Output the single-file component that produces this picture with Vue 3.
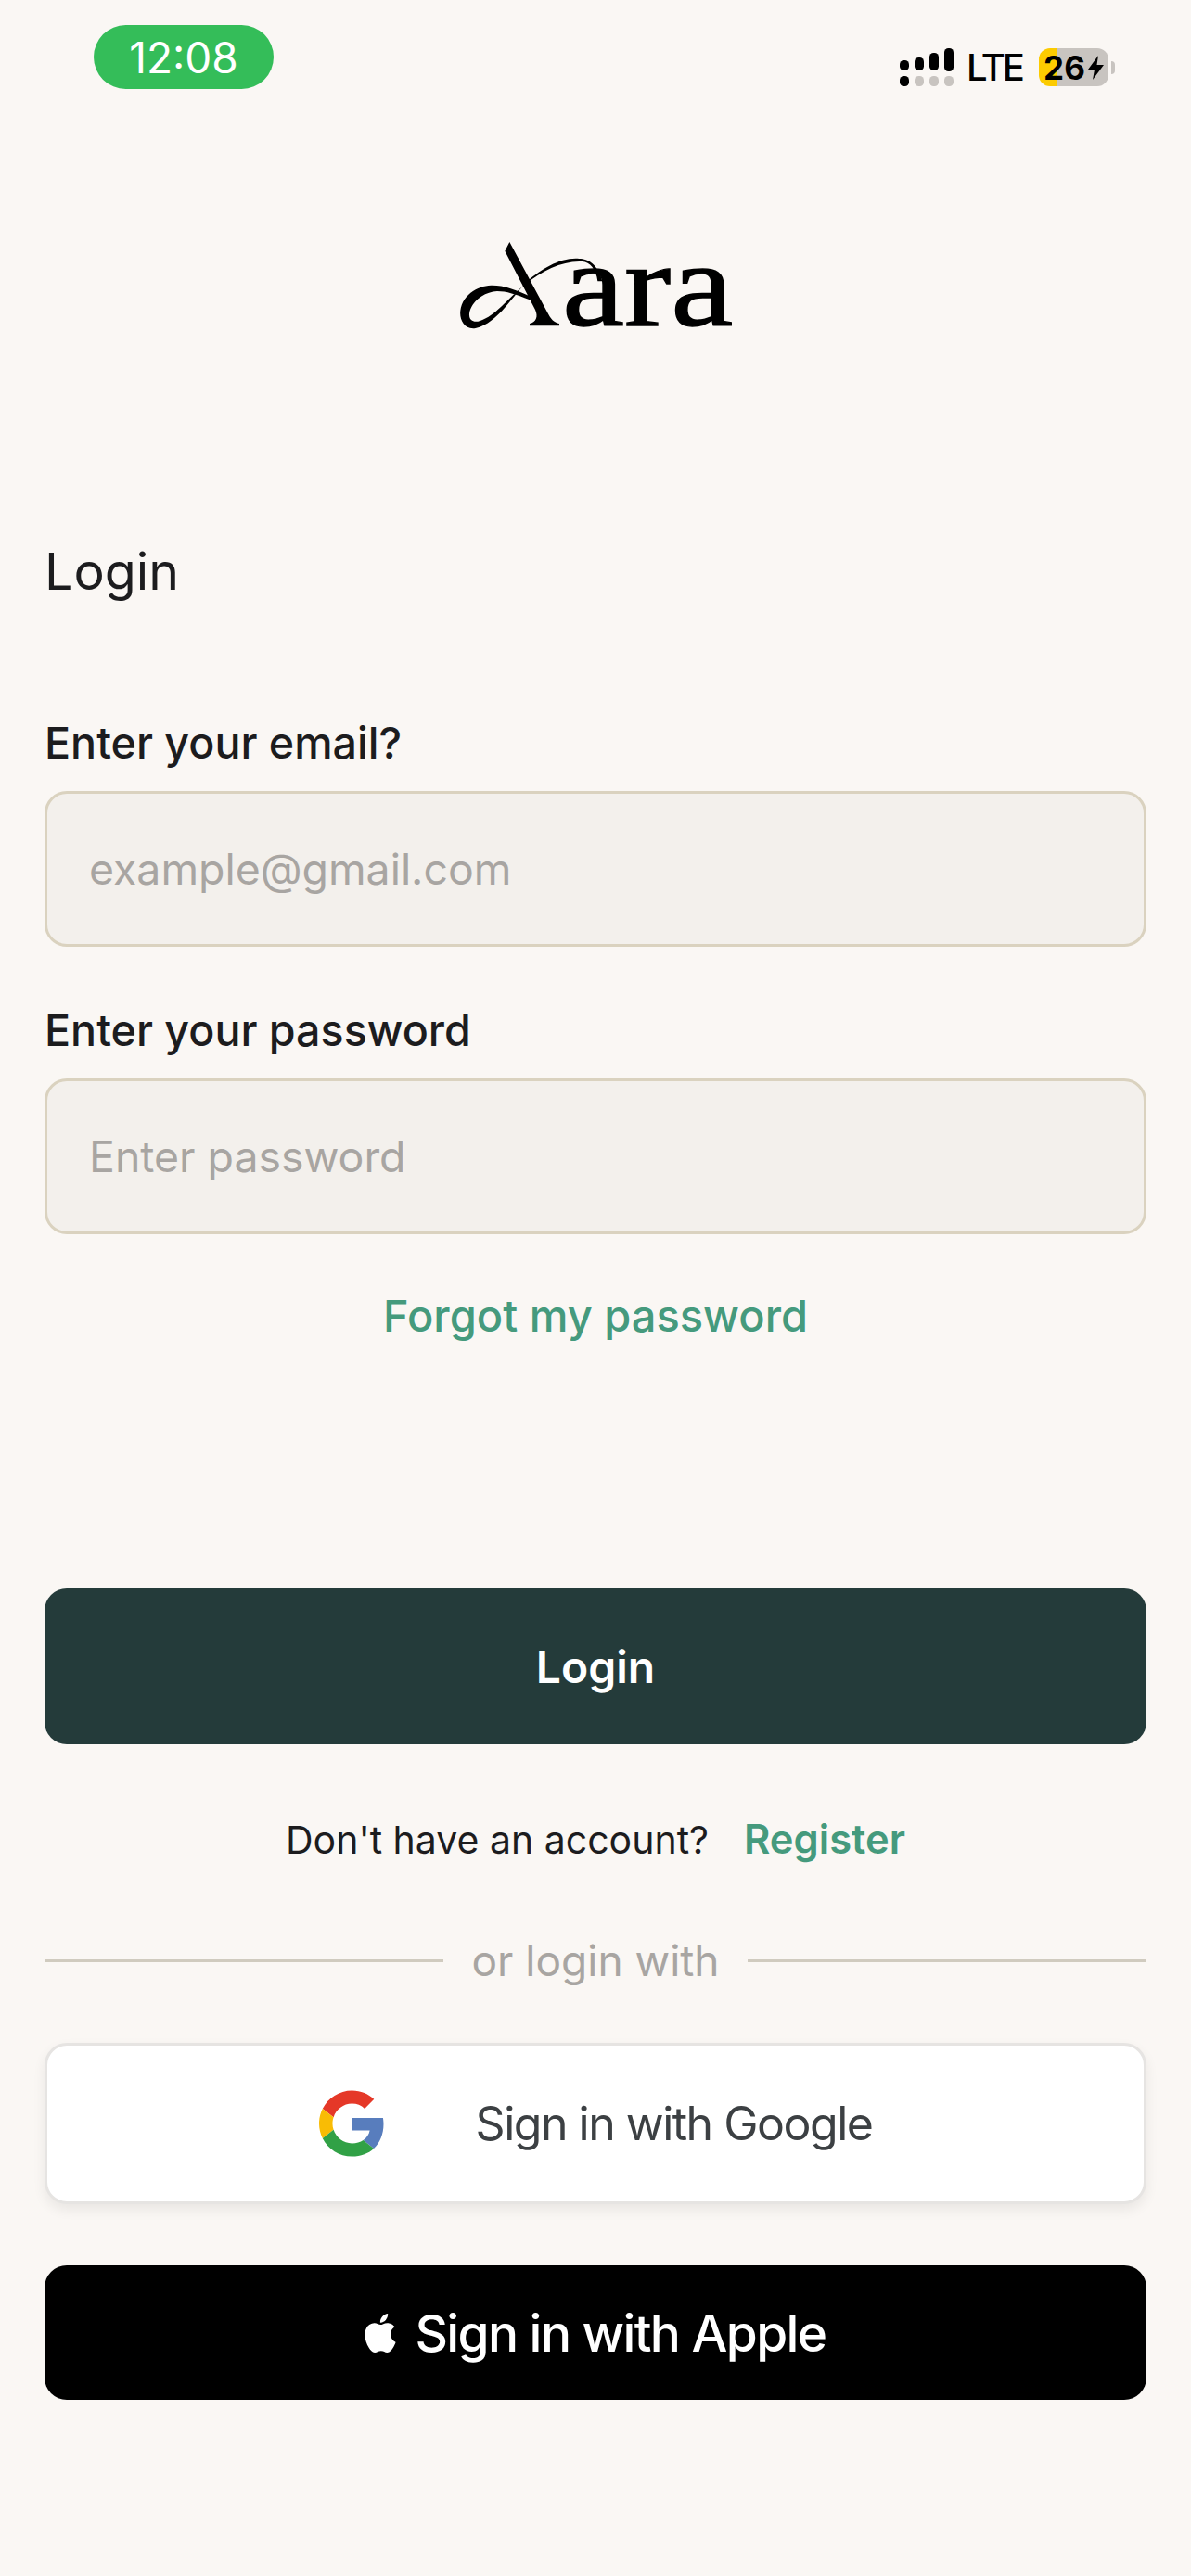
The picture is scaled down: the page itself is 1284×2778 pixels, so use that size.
<template>
  <div class="page">
    <div class="status">
      <div class="clock">12:08</div>
      <div class="status-right">
        <svg class="signal" width="58" height="41" viewBox="0 0 58 41">
          <rect x="0" y="13" width="10" height="11" rx="4.5" fill="#000" />
          <rect x="16" y="10" width="10" height="14" rx="4.5" fill="#000" />
          <rect x="32" y="5" width="10" height="19" rx="4.5" fill="#000" />
          <rect x="48" y="0" width="10" height="25" rx="4.5" fill="#000" />
          <rect x="0" y="30" width="10" height="11" rx="4.5" fill="#000" />
          <rect x="16" y="30" width="10" height="11" rx="4.5" fill="#c8c4c0" />
          <rect x="32" y="30" width="10" height="11" rx="4.5" fill="#c8c4c0" />
          <rect x="48" y="30" width="10" height="11" rx="4.5" fill="#c8c4c0" />
        </svg>
        <span class="lte">LTE</span>
        <div class="battery">
          <span>26</span>
          <svg width="17" height="26" viewBox="0 0 17 26"><path d="M11 0 L0 15 H7 L5 26 L17 10 H9.500 Z" fill="#000" /></svg>
        </div>
      </div>
    </div>

    <div class="logo-row">
      <svg class="logo" width="340" height="170" viewBox="0 -60 1020 510">
        <path d="M235 63 L220 92 L318 282 C328 304 322 322 300 327 L300 334 L396 334 L396 327 C378 324 368 312 358 292 Z" fill="#000" />
        <path d="M535 190 C520 135 490 117 460 117 C400 112 340 150 295 188 C250 228 200 325 125 342 C90 348 72 315 76 285 C82 235 130 205 175 203 C215 202 250 215 305 240 L300 250 C255 232 225 222 195 222 C150 224 108 260 105 295 C103 318 120 325 140 318 C190 300 225 250 285 200 C340 155 410 122 470 126 C495 128 515 150 520 190 Z" fill="#000" />
        <text x="405" y="333" class="logo-text" textLength="553" lengthAdjust="spacingAndGlyphs">ara</text>
      </svg>
    </div>

    <h1 class="title">Login</h1>

    <label class="label">Enter your email?</label>
    <div class="input">example@gmail.com</div>

    <label class="label second">Enter your password</label>
    <div class="input">Enter password</div>

    <a class="forgot">Forgot my password</a>

    <button class="btn-login">Login</button>

    <div class="register">
      <span>Don't have an account?</span>
      <a>Register</a>
    </div>

    <div class="divider">
      <span class="line"></span>
      <span class="or">or login with</span>
      <span class="line"></span>
    </div>

    <button class="btn-google">
      <svg width="71" height="72" viewBox="0 0 48 48">
        <path fill="#E53828" d="M24 9.5c3.54 0 6.71 1.220 9.210 3.600l6.850-6.850C35.900 2.380 30.470 0 24 0 14.620 0 6.510 5.380 2.560 13.220l7.980 6.190C12.430 13.720 17.740 9.500 24 9.500z" />
        <path fill="#587DBD" d="M46.980 24.550c0-1.570-.15-3.090-.38-4.550H24v9.020h12.940c-.58 2.960-2.260 5.480-4.780 7.180l7.730 6c4.510-4.180 7.090-10.360 7.090-17.650z" />
        <path fill="#F9BC05" d="M10.530 28.590c-.48-1.450-.76-2.990-.76-4.590s.27-3.140.76-4.590l-7.980-6.190C.92 16.460 0 20.120 0 24c0 3.880.92 7.540 2.560 10.780l7.970-6.190z" />
        <path fill="#31A146" d="M24 48c6.480 0 11.930-2.130 15.890-5.810l-7.730-6c-2.150 1.450-4.920 2.300-8.160 2.300-6.260 0-11.570-4.220-13.470-9.910l-7.980 6.190C6.510 42.620 14.620 48 24 48z" />
      </svg>
      <span>Sign in with Google</span>
    </button>

    <button class="btn-apple">
      <svg width="34" height="42" viewBox="2 0 20 24" preserveAspectRatio="none">
        <path fill="#fff" d="M12.152 6.896c-.948 0-2.415-1.078-3.960-1.040-2.040.027-3.910 1.183-4.961 3.014-2.117 3.675-.546 9.103 1.519 12.090 1.013 1.454 2.208 3.090 3.792 3.039 1.520-.065 2.090-.987 3.935-.987 1.831 0 2.350.987 3.960.948 1.637-.026 2.676-1.480 3.676-2.948 1.156-1.688 1.636-3.325 1.662-3.415-.039-.013-3.182-1.221-3.220-4.857-.026-3.040 2.480-4.494 2.597-4.559-1.429-2.090-3.623-2.324-4.390-2.376-2-.156-3.675 1.090-4.610 1.090zM15.530 3.830c.843-1.012 1.400-2.427 1.245-3.830-1.207.052-2.662.805-3.532 1.818-.78.896-1.454 2.338-1.273 3.714 1.338.104 2.715-.688 3.559-1.701" />
      </svg>
      <span>Sign in with Apple</span>
    </button>
  </div>
</template>

<script setup>
</script>

<style>
html, body { background: #faf7f4; }
</style>

<style scoped>
.page {
  width: 1284px; height: 2778px; box-sizing: border-box; overflow: hidden;
  padding: 27px 48px 0; background: #faf7f4; color: #1c1c1e;
  font-family: Inter, "Noto Sans", sans-serif;
  display: flex; flex-direction: column;
}
.status { display: flex; justify-content: space-between; align-items: flex-start; padding: 0 0 0 53px; }
.clock {
  width: 194px; height: 69px; border-radius: 35px; background: #34bd59; color: #fff;
  font-size: 46px; font-weight: 400; display: flex; align-items: center; justify-content: center;
}
.status-right { display: flex; align-items: center; margin: 25px 41px 0 0; height: 41px; }
.signal { display: block; margin-right: -2px; }
.lte { font-size: 40px; font-weight: 500; color: #000; margin-left: 16px; line-height: 41px; letter-spacing: -3px; }
.battery {
  position: relative; width: 75px; height: 41px; margin-left: 18px; border-radius: 12px;
  background: linear-gradient(90deg, #fccb00 0 20px, #c8c4c0 20px);
  display: flex; align-items: center; justify-content: center; gap: 3px;
  font-size: 35px; font-weight: 700; color: #000;
}
.battery::after {
  content: ""; position: absolute; left: 78px; top: 14px; width: 4px; height: 14px;
  background: #c8c4c0; border-radius: 0 7px 7px 0;
}
.logo-row { display: flex; justify-content: center; margin-top: 124px; height: 170px; }
.logo { display: block; margin-left: -2px; }
.logo-text { font-family: "Liberation Serif", serif; font-size: 385px; fill: #000; stroke: #000; stroke-width: 4px; }
.title { margin: 191px 0 0; font-size: 55.5px; line-height: 70px; font-weight: 400; color: #1c1c1e; }
.label { display: block; margin-top: 120px; font-size: 46.6px; line-height: 60px; font-weight: 500; color: #1c1c1e; }
.label.second { margin-top: 60px; }
.input {
  box-sizing: border-box; height: 168px; margin-top: 22px; padding: 0 45px;
  border: 3px solid #dad2bf; border-radius: 24px; background: #f3f0ec;
  display: flex; align-items: center; font-size: 46.4px; color: #a8a5a2;
}
.forgot { margin-top: 59px; text-align: center; font-size: 47px; line-height: 58px; font-weight: 500; color: #459a7d; }
button { font-family: inherit; border: 0; display: flex; align-items: center; justify-content: center; width: 100%; padding: 0; }
.btn-login {
  height: 168px; margin-top: 265px; border-radius: 24px; background: #243b3a; color: #fff;
  font-size: 48px; font-weight: 600;
}
.register { margin-top: 72px; display: flex; justify-content: center; gap: 38px; align-items: baseline; font-size: 41px; line-height: 60px; color: #1c1c1e; }
.register a { font-size: 43.5px; font-weight: 600; color: #459a7d; }
.divider { margin-top: 70px; display: flex; align-items: center; gap: 30px; height: 60px; }
.line { flex: 1; height: 3px; background: #d0cbbf; }
.or { font-size: 46px; color: #a8a5a2; }
.btn-google {
  box-sizing: border-box; width: auto; height: 174px; margin: 59px 0 0; gap: 98px; border: 3px solid #e6e4e2; border-radius: 24px;
  background: #fff; color: #3c4043; font-size: 50px; font-weight: 400; letter-spacing: -1.5px;
  box-shadow: 0 6px 14px rgba(0, 0, 0, .07);
}
.btn-apple {
  height: 145px; margin-top: 66px; gap: 20px; border-radius: 24px; background: #000; color: #fff;
  font-size: 55px; font-weight: 500; letter-spacing: -1.600px;
}
</style>
